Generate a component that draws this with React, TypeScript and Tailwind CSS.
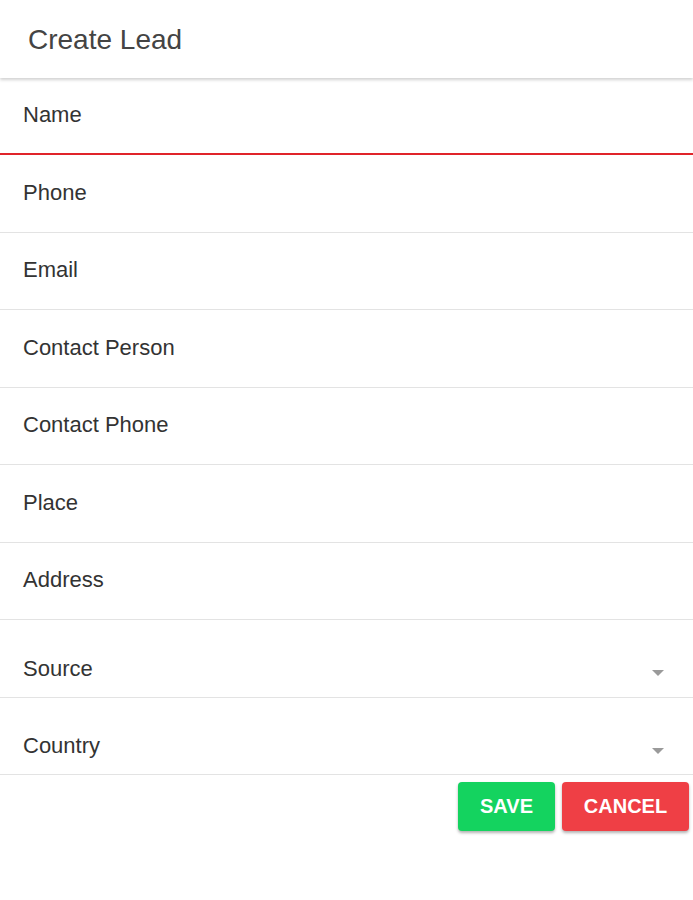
import React from "react";

const fields = ["Phone", "Email", "Contact Person", "Contact Phone", "Place", "Address"];

function Caret() {
  return (
    <svg width="12" height="6" viewBox="0 0 12 6" className="mr-[29px] mt-[10px]">
      <path d="M0 0 L12 0 L6 6 Z" fill="#9a9a9a" />
    </svg>
  );
}

export default function App() {
  return (
    <div className="w-[693px] h-[900px] bg-white font-['Liberation_Sans',Arial,sans-serif]">
      <div className="h-[78px] flex items-center pl-[28px] shadow-[0_2px_3px_rgba(0,0,0,0.18)] relative z-10">
        <span className="text-[28px] text-[#444] pt-[2px]">Create Lead</span>
      </div>
      <div className="h-[77px] border-b-2 border-[#e0242a] flex items-center pl-[23px] pb-[2px]">
        <span className="text-[22px] text-[#333]">Name</span>
      </div>
      {fields.map((f) => (
        <div key={f} className="h-[77.5px] border-b border-[#e3e3e3] flex items-center pl-[23px] pb-[2px]">
          <span className="text-[22px] text-[#333]">{f}</span>
        </div>
      ))}
      {["Source", "Country"].map((f) => (
        <div key={f} className="h-[77.5px] border-b border-[#e3e3e3] flex items-center justify-between pl-[23px] pt-[20px]">
          <span className="text-[22px] text-[#333]">{f}</span>
          <Caret />
        </div>
      ))}
      <div className="flex justify-end gap-[7px] pr-[4px] pt-[7px]">
        <button className="w-[97px] h-[49px] rounded-[4px] bg-[#14d35f] text-white font-bold text-[20px] pb-[2px] shadow-[0_2px_3px_rgba(0,0,0,0.3)]">
          SAVE
        </button>
        <button className="w-[127px] h-[49px] rounded-[4px] bg-[#ef3f45] text-white font-bold text-[20px] pb-[2px] shadow-[0_2px_3px_rgba(0,0,0,0.3)]">
          CANCEL
        </button>
      </div>
    </div>
  );
}
